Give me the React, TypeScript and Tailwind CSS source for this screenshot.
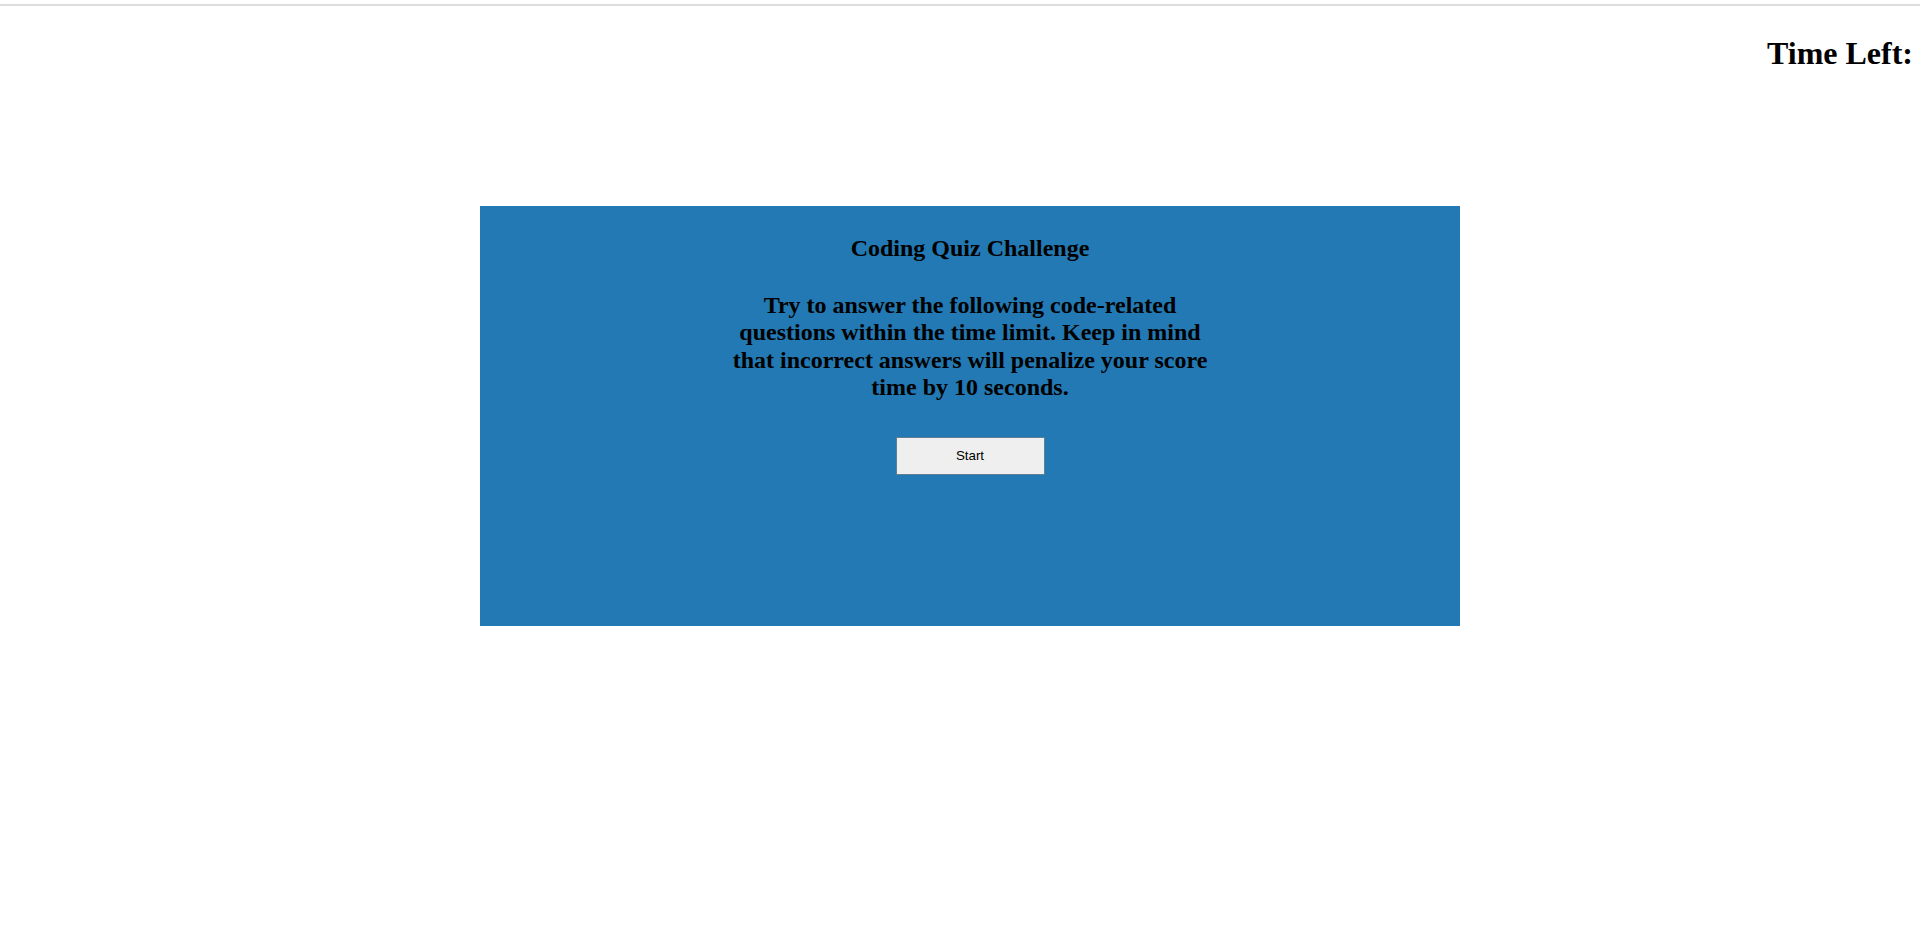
import React from "react";

export default function App() {
  return (
    <div className="min-h-[937px] bg-white font-['Liberation_Serif',serif] text-black">
      {/* top rule */}
      <div className="pt-[4px]">
        <div className="border-t-2 border-[#dddddd] w-[1920px]" />
      </div>

      <header className="flex justify-end pr-[12px] mt-[29px]">
        <h1 className="text-[32px] leading-[37px] font-bold">Time Left:</h1>
      </header>

      <main className="mt-[134px] ml-[480px] w-[980px] h-[420px] bg-[#2279b4] flex flex-col">
        <div className="flex flex-col items-center pt-[29px]">
          <h2 className="text-[24px] leading-[27.5px] font-bold">
            Coding Quiz Challenge
          </h2>
          <p className="mt-[29px] w-[490px] text-center text-[24px] leading-[27.5px] font-bold">
            Try to answer the following code-related questions within the time
            limit. Keep in mind that incorrect answers will penalize your score
            time by 10 seconds.
          </p>
        </div>
        <div className="flex justify-center mt-[35px]">
          <button className="w-[149px] h-[38px] bg-[#efefef] border border-[#5f7f96] font-['Liberation_Sans',sans-serif] text-[13.33px]">
            Start
          </button>
        </div>
      </main>
    </div>
  );
}
